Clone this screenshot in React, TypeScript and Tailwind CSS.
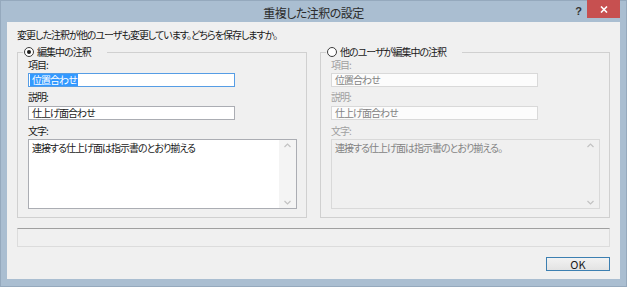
import React from 'react';

const font = "font-['Noto_Sans_CJK_JP','Noto_Sans',sans-serif] [font-feature-settings:'palt']";
const txt = 'text-[10px] leading-[12px] tracking-[-1px]';

const Radio: React.FC<{ checked?: boolean }> = ({ checked }) => (
  <span className="w-[10px] h-[10px] rounded-full border border-[#3c3c3c] bg-white flex items-center justify-center shrink-0">
    {checked && <span className="w-[4px] h-[4px] rounded-full bg-[#1a1a1a]" />}
  </span>
);

const TextBox: React.FC<{
  text: string;
  disabled?: boolean;
  focused?: boolean;
  selected?: boolean;
}> = ({ text, disabled, focused, selected }) => (
  <div
    className={
      'w-[207px] h-[14px] border flex items-center pl-[1px] ' + txt + ' ' +
      (focused ? 'border-[#569de5] bg-white ' : disabled ? 'border-[#d9d9d9] bg-[#fcfcfc] ' : 'border-[#abadb3] bg-white ')
    }
  >
    {selected ? (
      <span className="bg-[#3399ff] text-white pl-[2px] pr-[1px]">{text}</span>
    ) : (
      <span className={disabled ? 'text-[#838383] pl-[2px]' : 'text-[#1a1a1a] pl-[2px]'}>{text}</span>
    )}
  </div>
);

const MemoBox: React.FC<{ text: string; disabled?: boolean }> = ({ text, disabled }) => (
  <div
    className={
      'w-[269px] h-[70px] border flex ' +
      (disabled ? 'border-[#d9d9d9] bg-[#f0f0f0]' : 'border-[#abadb3] bg-white')
    }
  >
    <div className={'flex-1 pl-[3px] pt-[2px] ' + txt + ' ' + (disabled ? 'text-[#838383]' : 'text-[#1a1a1a]')}>
      {text}
    </div>
    <div className={'w-[17px] flex flex-col items-center justify-between py-[3px] ' + (disabled ? 'bg-[#f0f0f0]' : 'bg-[#f4f4f4]')}>
      <svg width="7" height="5" viewBox="0 0 7 5">
        <path d="M0.5 4 L3.5 1 L6.5 4" fill="none" stroke="#c2c2c2" strokeWidth="1.2" />
      </svg>
      <svg width="7" height="5" viewBox="0 0 7 5">
        <path d="M0.5 1 L3.5 4 L6.5 1" fill="none" stroke="#c2c2c2" strokeWidth="1.2" />
      </svg>
    </div>
  </div>
);

const Group: React.FC<{
  legend: string;
  checked?: boolean;
  disabled?: boolean;
  item: string;
  desc: string;
  memo: string;
}> = ({ legend, checked, disabled, item, desc, memo }) => {
  const label = txt + ' ' + (disabled ? 'text-[#a0a0a0]' : 'text-[#1a1a1a]');
  return (
    <div className="relative w-[290px] h-[166px] border border-[#d0d0d0] pl-[10px] pt-[6px] flex flex-col">
      <div className="absolute left-[5px] top-[-7px] bg-[#f0f0f0] flex items-center gap-[3px] pl-[1px] pr-[16px] h-[12px]">
        <Radio checked={checked} />
        <span className={txt + ' text-[#1a1a1a]'}>{legend}</span>
      </div>
      <div className={label}>項目:</div>
      <div className="mt-[2px]">
        <TextBox text={item} disabled={disabled} focused={!disabled} selected={!disabled} />
      </div>
      <div className={label + ' mt-[4px]'}>説明:</div>
      <div className="mt-[3px]">
        <TextBox text={desc} disabled={disabled} />
      </div>
      <div className={label + ' mt-[5px]'}>文字:</div>
      <div className="mt-[2px]">
        <MemoBox text={memo} disabled={disabled} />
      </div>
    </div>
  );
};

export default function App() {
  return (
    <div className={'w-[627px] h-[287px] bg-[#aabed1] border border-[#95a9bd] flex flex-col ' + font}>
      <div className="relative h-[21px] flex items-center justify-center pt-[3px]">
        <span className="text-[12px] leading-[14px] text-[#2b2b2b] tracking-[-0.5px]">重複した注釈の設定</span>
        <span className="absolute right-[44px] top-[2px] text-[11px] font-bold text-[#333] font-['Liberation_Sans',sans-serif]">?</span>
        <div className="absolute right-[6px] top-[-1px] w-[33px] h-[18px] bg-[#c75050] flex items-center justify-center">
          <svg width="8" height="7" viewBox="0 0 8 7">
            <path d="M1 0.5 L7 6.5 M7 0.5 L1 6.5" stroke="white" strokeWidth="1.6" />
          </svg>
        </div>
      </div>
      <div className="mx-[6px] mb-[7px] flex-1 bg-[#f0f0f0] px-[10px] pt-[7px] flex flex-col">
        <div className={txt + ' text-[#1a1a1a]'}>
          変更した注釈が他のユーザも変更しています。どちらを保存しますか。
        </div>
        <div className="mt-[11px] flex gap-[13px]">
          <Group
            legend="編集中の注釈"
            checked
            item="位置合わせ"
            desc="仕上げ面合わせ"
            memo="連接する仕上げ面は指示書のとおり揃える"
          />
          <Group
            legend="他のユーザが編集中の注釈"
            disabled
            item="位置合わせ"
            desc="仕上げ面合わせ"
            memo="連接する仕上げ面は指示書のとおり揃える。"
          />
        </div>
        <div className="mt-[10px] h-[19px] border border-[#dcdcdc] border-t-[#a0a0a0]" />
        <div className="mt-[10px] flex justify-end">
          <div className="w-[64px] h-[14px] border border-[#3c7fb1] bg-gradient-to-b from-[#f2f2f2] to-[#e3e3e3] flex items-center justify-center text-[11px] leading-[12px] text-[#1a1a1a]">
            OK
          </div>
        </div>
      </div>
    </div>
  );
}
